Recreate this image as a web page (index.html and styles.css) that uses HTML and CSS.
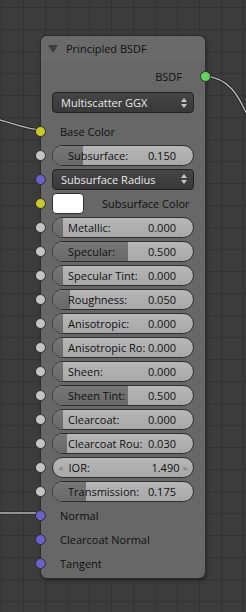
FILE: index.html
```html
<!DOCTYPE html>
<html lang="en">
<head>
  <meta charset="UTF-8" />
  <title>Principled BSDF</title>
  <link rel="stylesheet" href="styles.css">
</head>
<body>
  <div class="canvas">
    <!-- wires live under the node -->
    <svg class="wires" width="246" height="612" viewBox="0 0 246 612">
      <path class="wire-edge" d="M -40 112 C 0 116, 20 129, 41 130" />
      <path class="wire" d="M -40 112 C 0 116, 20 129, 41 130" />
      <path class="wire-edge" d="M 205 76 C 228 78, 238 92, 252 126" />
      <path class="wire" d="M 205 76 C 228 78, 238 92, 252 126" />
      <path class="wire-edge" d="M 0 513 L 41 513" />
      <path class="wire" d="M 0 513 L 41 513" />
    </svg>

    <div class="node">
      <div class="node-head">
        <span class="collapse"></span>
        <span class="title">Principled BSDF</span>
      </div>

      <div class="row out">
        <span class="label">BSDF</span>
        <span class="sock shader"></span>
      </div>

      <div class="menu top-menu">
        <span>Multiscatter GGX</span>
        <span class="updown"><i class="up"></i><i class="down"></i></span>
      </div>

      <div class="inputs">
        <div class="row"><span class="sock color"></span><span class="label">Base Color</span></div>

        <div class="row"><span class="sock float"></span>
          <div class="slider" style="--v:0.150"><span class="fill"></span><span class="name">Subsurface:</span><span class="val">0.150</span></div>
        </div>

        <div class="row"><span class="sock vector"></span>
          <div class="menu"><span>Subsurface Radius</span><span class="updown"><i class="up"></i><i class="down"></i></span></div>
        </div>

        <div class="row"><span class="sock color"></span>
          <span class="swatch"></span><span class="label swatch-label">Subsurface Color</span>
        </div>

        <div class="row"><span class="sock float"></span>
          <div class="slider" style="--v:0"><span class="fill"></span><span class="name">Metallic:</span><span class="val">0.000</span></div>
        </div>
        <div class="row"><span class="sock float"></span>
          <div class="slider" style="--v:0.5"><span class="fill"></span><span class="name">Specular:</span><span class="val">0.500</span></div>
        </div>
        <div class="row"><span class="sock float"></span>
          <div class="slider" style="--v:0"><span class="fill"></span><span class="name">Specular Tint:</span><span class="val">0.000</span></div>
        </div>
        <div class="row"><span class="sock float"></span>
          <div class="slider" style="--v:0.05"><span class="fill"></span><span class="name">Roughness:</span><span class="val">0.050</span></div>
        </div>
        <div class="row"><span class="sock float"></span>
          <div class="slider" style="--v:0"><span class="fill"></span><span class="name">Anisotropic:</span><span class="val">0.000</span></div>
        </div>
        <div class="row"><span class="sock float"></span>
          <div class="slider" style="--v:0"><span class="fill"></span><span class="name">Anisotropic Ro:</span><span class="val">0.000</span></div>
        </div>
        <div class="row"><span class="sock float"></span>
          <div class="slider" style="--v:0"><span class="fill"></span><span class="name">Sheen:</span><span class="val">0.000</span></div>
        </div>
        <div class="row"><span class="sock float"></span>
          <div class="slider" style="--v:0.5"><span class="fill"></span><span class="name">Sheen Tint:</span><span class="val">0.500</span></div>
        </div>
        <div class="row"><span class="sock float"></span>
          <div class="slider" style="--v:0"><span class="fill"></span><span class="name">Clearcoat:</span><span class="val">0.000</span></div>
        </div>
        <div class="row"><span class="sock float"></span>
          <div class="slider" style="--v:0.03"><span class="fill"></span><span class="name">Clearcoat Rou:</span><span class="val">0.030</span></div>
        </div>

        <div class="row"><span class="sock float"></span>
          <div class="number"><span class="arrow">&#9666;</span><span class="name">IOR:</span><span class="val">1.490</span><span class="arrow">&#9656;</span></div>
        </div>

        <div class="row"><span class="sock float"></span>
          <div class="slider" style="--v:0.175"><span class="fill"></span><span class="name">Transmission:</span><span class="val">0.175</span></div>
        </div>

        <div class="row"><span class="sock vector"></span><span class="label">Normal</span></div>
        <div class="row"><span class="sock vector"></span><span class="label">Clearcoat Normal</span></div>
        <div class="row"><span class="sock vector"></span><span class="label">Tangent</span></div>
      </div>
    </div>
  </div>
</body>
</html>
```

FILE: styles.css
```css
* {
  box-sizing: border-box;
}

body {
  margin: 0;
  font-family: 'Open Sans', 'DejaVu Sans', sans-serif;
  font-size: 11px;
  color: #111;
}

.canvas {
  position: relative;
  width: 246px;
  height: 612px;
  overflow: hidden;
  background-color: #3c3c3c;
  background-image:
    linear-gradient(to right, #333 1px, transparent 1px),
    linear-gradient(to bottom, #333 1px, transparent 1px);
  background-size: 22px 22px;
  background-position: 1px 7px;
}

.wires {
  position: absolute;
  left: 0;
  top: 0;
}

.wire-edge {
  fill: none;
  stroke: #1e1e1e;
  stroke-width: 3;
}

.wire {
  fill: none;
  stroke: #b8b8b8;
  stroke-width: 1.4;
}

/* the node sits on the free canvas */
.node {
  position: absolute;
  left: 41px;
  top: 36px;
  width: 164px;
  height: 542px;
  background: #676767;
  border-radius: 6px;
  box-shadow: 0 0 0 1px #2c2c2c, 1px 2px 4px rgba(0, 0, 0, 0.5);
}

.node-head {
  height: 24px;
  display: flex;
  align-items: center;
  padding-left: 7px;
  background: #6a6a6a;
  border-radius: 6px 6px 0 0;
}

.collapse {
  width: 0;
  height: 0;
  border-left: 5px solid transparent;
  border-right: 5px solid transparent;
  border-top: 8px solid #3e3e3e;
  margin-right: 8px;
  margin-top: 1px;
}

.title {
  color: #111;
}

.row {
  height: 24px;
  display: flex;
  align-items: center;
}

.row.out {
  margin-top: 4px;
  justify-content: flex-end;
}

.row.out .label {
  margin-right: 18px;
}

.sock {
  flex: none;
  width: 11px;
  height: 11px;
  border-radius: 50%;
  border: 1px solid #2a2a2a;
  margin-left: -6px;
}

.row.out .sock {
  margin-left: 0;
  margin-right: -6px;
}

.sock.float { background: #c4c4c4; }
.sock.color { background: #c9c92b; }
.sock.vector { background: #6a62cc; }
.sock.shader { background: #5fd45f; }

.label {
  margin-left: 14px;
  white-space: nowrap;
}

.inputs {
  margin-top: 6px;
}

.menu {
  height: 21px;
  width: 142px;
  display: flex;
  align-items: center;
  justify-content: space-between;
  padding: 0 6px 0 8px;
  border: 1px solid #222;
  border-radius: 4px;
  background: linear-gradient(#454545, #393939);
  color: #e8e8e8;
  white-space: nowrap;
}

.top-menu {
  margin: 4px 0 0 11px;
}

.row .menu,
.row .slider,
.row .number,
.row .swatch {
  margin-left: 6px;
}

.updown {
  display: flex;
  flex-direction: column;
  gap: 2px;
}

.updown i {
  width: 0;
  height: 0;
  border-left: 3px solid transparent;
  border-right: 3px solid transparent;
}

.updown .up { border-bottom: 4px solid #c8c8c8; }
.updown .down { border-top: 4px solid #c8c8c8; }

.swatch {
  width: 32px;
  height: 21px;
  flex: none;
  background: #fff;
  border: 1px solid #2e2e2e;
  border-radius: 4px;
}

.swatch-label {
  margin-left: 18px;
}

.slider,
.number {
  position: relative;
  overflow: hidden;
  width: 142px;
  height: 21px;
  display: flex;
  align-items: center;
  border: 1px solid #2c2c2c;
  border-radius: 11px;
  background: linear-gradient(#b6b6b6, #a8a8a8);
  white-space: nowrap;
}

.slider {
  padding: 0 17px 0 15px;
}

.fill {
  position: absolute;
  left: 0;
  top: 0;
  bottom: 0;
  width: calc(10px + 130px * var(--v));
  background: linear-gradient(#767676, #686868);
}

.name,
.val {
  position: relative;
}

.val {
  margin-left: auto;
}

.number {
  padding: 0 5px 0 5px;
}

.number .name {
  margin-left: 6px;
}

.number .val {
  margin-right: 4px;
}

.arrow {
  color: #8a8a8a;
  font-size: 9px;
}
```
